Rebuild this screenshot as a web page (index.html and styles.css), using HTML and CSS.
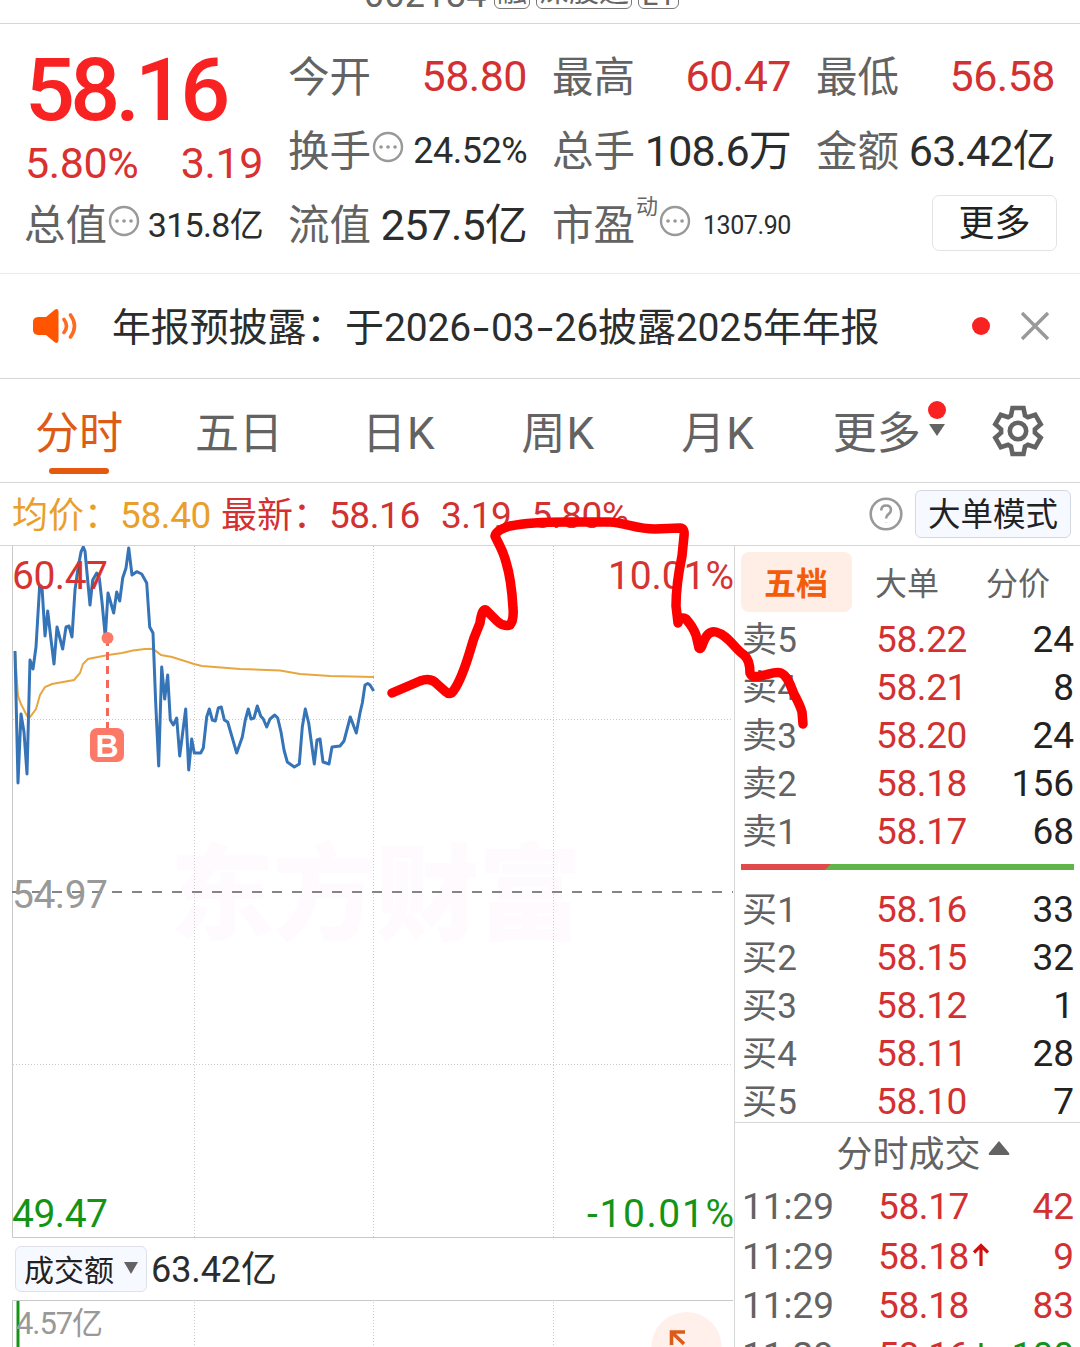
FILE: index.html
```html
<!DOCTYPE html>
<html lang="zh-CN">

<head>
    <meta charset="UTF-8">
    <meta name="viewport" content="width=device-width, initial-scale=1.0">
    <title>分时行情</title>
    <link rel="stylesheet" href="styles.css">
</head>

<body>
    <div id="app">
        <!-- 股票代码 -->
        <div class="code">
            <b>002184</b>
            <span>融</span>
            <span>深股通</span>
            <span>L1</span>
        </div>

        <!-- 行情概览 -->
        <div class="quote">
            <div class="price">
                <strong>58.16</strong>
                <p><span>5.80%</span><span>3.19</span></p>
            </div>
            <div class="cell"><label>今开</label><em class="red">58.80</em></div>
            <div class="cell"><label>最高</label><em class="red">60.47</em></div>
            <div class="cell"><label>最低</label><em class="red">56.58</em></div>
            <div class="cell">
                <label>换手</label>
                <svg class="dots" viewBox="0 0 32 32"><circle cx="16" cy="16" r="14" /><path d="M9 16h.1M16 16h.1M23 16h.1" /></svg>
                <em class="mid">24.52%</em>
            </div>
            <div class="cell"><label>总手</label><em class="wide">108.6万</em></div>
            <div class="cell"><label>金额</label><em class="wide">63.42亿</em></div>
            <div class="cell">
                <label>总值</label>
                <svg class="dots" viewBox="0 0 32 32"><circle cx="16" cy="16" r="14" /><path d="M9 16h.1M16 16h.1M23 16h.1" /></svg>
                <em class="small">315.8亿</em>
            </div>
            <div class="cell"><label>流值</label><em class="wide">257.5亿</em></div>
            <div class="cell">
                <label>市盈</label><sup>动</sup>
                <svg class="dots" viewBox="0 0 32 32"><circle cx="16" cy="16" r="14" /><path d="M9 16h.1M16 16h.1M23 16h.1" /></svg>
                <em class="tiny">1307.90</em>
            </div>
            <div class="cell end"><button class="more">更多</button></div>
        </div>

        <!-- 公告 -->
        <div class="news">
            <svg class="horn" viewBox="0 0 46 36">
                <path class="body" d="M5 9h8L22 1.500q3-1.500 3.500 2v29q-.5 3.500-3.500 2l-9-7.500H5q-5-.5-5-5v-8q0-4.500 5-5z" />
                <path class="wave" d="M31 11.500q5 6.500 0 13M37.500 7q8 11 0 22" />
            </svg>
            <p>年报预披露：于2026<i>-</i>03<i>-</i>26披露2025年年报</p>
            <i class="dot"></i>
            <svg class="close" viewBox="0 0 30 30"><path d="M2 2l26 26M28 2L2 28" /></svg>
        </div>

        <!-- 周期切换 -->
        <div class="tabs">
            <div class="tab active">分时</div>
            <div class="tab">五日</div>
            <div class="tab">日K</div>
            <div class="tab">周K</div>
            <div class="tab">月K</div>
            <div class="tab">更多<i class="dot"></i><i class="down"></i></div>
            <svg class="gear" viewBox="-26 -26 52 52">
                <path d="M-5.500-23H5.500L7-15.500 9.900-13.800 17.200-16.300 22.700-6.700 16.900-1.700V1.700L22.700 6.700 17.200 16.300 9.900 13.800 7 15.500 5.500 23H-5.500L-7 15.500-9.900 13.800-17.200 16.300-22.700 6.700-16.900 1.700V-1.700L-22.700-6.700-17.200-16.300-9.900-13.800-7-15.500Z" />
                <circle r="8.200" />
            </svg>
        </div>

        <div class="info">
            <span class="avg">均价：</span><span class="avg num">58.40</span>
            <span class="red last">最新：</span><span class="red num">58.16</span>
            <span class="red num chg">3.19</span><span class="red num pct">5.80%</span>
            <svg class="help" viewBox="0 0 34 34">
                <circle cx="17" cy="17" r="15.300" />
                <path d="M12.300 13.500q0-5 4.800-5t4.800 4.500q0 2.600-2.600 4.400-2.200 1.500-2.200 4M17 25.200v.2" />
            </svg>
            <button class="mode">大单模式</button>
        </div>

        <div class="main">
            <div class="left">
                <!-- 分时图 -->
                <svg class="chart" viewBox="0 546 734 692">
                    <text class="mark" x="170" y="932" textLength="412">东方财富</text>
                    <path class="frame" d="M12.500 546V1237.500H733" />
                    <path class="grid" d="M194.500 546V1237M373.500 546V1237M553.500 546V1237M13 719.500H733M13 1064.500H733" />
                    <path class="base" d="M12 892H733" />
                    <path class="avg-line" d="M15 651L18 696 21 704 27 716 30 717 36 709 40 695 45 687 52 684 74 680 80 673 83 664 88 659 108 655 122 653 133 650.500 145 649 153 648.700 161 655 172 657 194 664 202 666 240 669 280 670.500 300 674 330 676 374 677" />
                    <path class="price-line" d="M15 651L18 783 21 714 24 732 27 774 30 660 33 669 36 647 39.700 585 42 587 45 636 47.700 611 50.700 637 54 664 57 627 62.700 649 66 627 69 626 72 637 75 590 78 568 81 552 83.300 547 85 551 87 573 90 605 92.700 580 96.700 573 99.300 578 102 602 105.300 637 108 593 113.700 613 116.700 592 119.700 601 122.700 578 126 568 128.700 548 132 575 136.700 571.700 141.700 574 146.700 583 149.700 627 153 633 155.700 703 158.700 766 161.700 667 164.700 699 167.700 675 170.300 720 173.300 725 176.700 718 179.700 756 185.700 709 188.700 770 191.700 739 194.300 753 200.700 753 203.300 748 206.700 717 209.300 709 212.300 720 215.300 721 218.300 708 221.300 707 224.300 720 227.700 722 236.700 753 242.300 737 245.300 720 248.300 709 251 719 254 718 257.300 706 260.700 716 263.300 719 266.700 727 270 719 274.700 715 277.700 718 281 732 284 750 287.300 762 294.300 767 299.300 764 302.300 727 305.300 709 308.700 723 314.300 764 317 740 320 739 323 762 329 764 332 747 340 746 344 741 350.300 717 356.300 733 360 713 362.300 703 365 685 367.700 683.500 370 685 373.700 691" />
                    <path class="buy-line" d="M107.500 638V728" />
                    <circle class="buy" cx="107.500" cy="638" r="6" />
                    <rect class="buy" x="90" y="728" width="34" height="34" rx="7" />
                    <text class="buy-text" x="107" y="756.500">B</text>
                    <text class="axis up" x="12" y="589" textLength="96">60.47</text>
                    <text class="axis up" x="608" y="589" textLength="126">10.01%</text>
                    <text class="axis flat" x="12" y="908" textLength="96">54.97</text>
                    <text class="axis fall" x="12" y="1227" textLength="96">49.47</text>
                    <text class="axis fall" x="587" y="1227" textLength="147">-10.01%</text>
                </svg>
                <div class="amount">
                    <button>成交额<i class="down"></i></button>
                    <span>63.42亿</span>
                </div>
                <svg class="volume" viewBox="0 1300 734 47">
                    <path class="frame" d="M12.500 1347V1300.500H733" />
                    <path class="grid" d="M194.500 1302V1347M373.500 1302V1347M553.500 1302V1347" />
                    <path class="vol-bar" d="M18 1301V1347" />
                    <text class="vol-text" x="16" y="1334" textLength="87">4.57亿</text>
                    <circle class="expand" cx="686.500" cy="1347" r="35" />
                    <path class="expand-icon" d="M671.500 1345V1332H685M672 1332.500L684 1344" />
                </svg>
            </div>

            <!-- 盘口 -->
            <div class="right">
                <div class="types">
                    <span class="on">五档</span>
                    <span>大单</span>
                    <span>分价</span>
                </div>
                <div class="orders">
                    <div class="row"><label>卖5</label><em>58.22</em><b>24</b></div>
                    <div class="row"><label>卖4</label><em>58.21</em><b>8</b></div>
                    <div class="row"><label>卖3</label><em>58.20</em><b>24</b></div>
                    <div class="row"><label>卖2</label><em>58.18</em><b>156</b></div>
                    <div class="row"><label>卖1</label><em>58.17</em><b>68</b></div>
                </div>
                <div class="ratio"></div>
                <div class="orders">
                    <div class="row"><label>买1</label><em>58.16</em><b>33</b></div>
                    <div class="row"><label>买2</label><em>58.15</em><b>32</b></div>
                    <div class="row"><label>买3</label><em>58.12</em><b>1</b></div>
                    <div class="row"><label>买4</label><em>58.11</em><b>28</b></div>
                    <div class="row"><label>买5</label><em>58.10</em><b>7</b></div>
                </div>
                <div class="title">分时成交<svg viewBox="0 0 22 15"><path d="M11 0L21 12q1 2-1 2H2q-2 0-1-2z" /></svg></div>
                <div class="deals">
                    <div class="row"><label>11:29</label><em>58.17</em><b>42</b></div>
                    <div class="row">
                        <label>11:29</label>
                        <em>58.18<svg class="arrow" viewBox="0 0 16 24"><path d="M8 23V3M1 9.500L8 2.500 15 9.500" /></svg></em>
                        <b>9</b>
                    </div>
                    <div class="row"><label>11:29</label><em>58.18</em><b>83</b></div>
                    <div class="row sell">
                        <label>11:29</label>
                        <em>58.16<svg class="arrow" viewBox="0 0 16 24"><path d="M8 1V21M1 14.500L8 21.500 15 14.500" /></svg></em>
                        <b>100</b>
                    </div>
                </div>
            </div>
        </div>

        <!-- 手绘走势 -->
        <svg class="draw" viewBox="0 0 1080 1347">
            <path d="M392 693L420 681Q431 677 437 684L446 692Q450 696 454 690C464 676 470 650 474 638L480 623Q482 608 486 610L497 621Q503 627 510 625Q514 620 513 608C512 590 510 575 506 562C503 550 499 545 495 536Q496 530 510 526C530 522 550 522 567 522H610C626 523 637 529 655 529L680 528Q685 528 684 536L682 556C678 575 676 592 676 606L678 623Q680 616 686 619Q693 627 696 635L699 648Q701 650 703 643Q708 630 716 632C728 635 734 648 744 655Q750 660 750 673Q752 678 760 676C768 675 775 671 781 673C788 676 791 687 794 694Q800 705 802 712L803 724" />
        </svg>
    </div>
</body>

</html>
```

FILE: styles.css
```css
* {
    margin: 0;
    padding: 0;
    box-sizing: border-box;
}

body {
    width: 1080px;
    height: 1347px;
    overflow: hidden;
    background-color: #fff;
    color: #2b2d2d;
    font-family: Roboto, "Noto Sans CJK SC", sans-serif;
}

em,
i {
    font-style: normal;
}

button {
    font-family: inherit;
    color: #222;
}

#app {
    position: relative;
    width: 1080px;
    height: 1347px;
    overflow: hidden;
}

.red {
    color: #d33131;
}

/* 股票代码 */
.code {
    height: 24px;
    display: flex;
    align-items: flex-end;
    padding: 0 0 14px 364px;
    border-bottom: 1px solid #d6d6d6;
    color: #666;
}

.code b {
    width: 130px;
    font-size: 36px;
    font-weight: 400;
    line-height: 30px;
    margin-bottom: -1px;
    letter-spacing: .2px;
}

.code span {
    height: 36px;
    margin: 0 6px 0 0;
    padding: 0 2px;
    border: 1px solid #777;
    border-radius: 6px;
    font-size: 30px;
    line-height: 34px;
}

.code span:last-child {
    width: 41px;
    text-align: center;
    line-height: 42px;
}

/* 行情概览 */
.quote {
    height: 250px;
    display: grid;
    grid-template-columns: repeat(4, 238px);
    grid-template-rows: repeat(3, 74px);
    column-gap: 26px;
    padding: 15px 25px 0;
    border-bottom: 1px solid #ebebeb;
}

.price {
    grid-row: span 2;
}

.price strong {
    display: block;
    height: 102px;
    font-size: 88px;
    font-weight: 500;
    line-height: 102px;
    letter-spacing: -4.800px;
    color: #f92222;
}

.price p {
    display: flex;
    justify-content: space-between;
    font-size: 43px;
    line-height: 44px;
    letter-spacing: -.4px;
    color: #d93030;
}

.cell {
    display: flex;
    align-items: center;
    white-space: nowrap;
}

.cell label {
    margin: -5px 0 0 -1px;
    font-size: 41.500px;
    color: #636363;
}

.cell em {
    margin-left: auto;
    font-size: 43px;
    letter-spacing: -.5px;
}

.cell .wide {
    margin-top: -6px;
    letter-spacing: -.8px;
}

.cell .mid {
    margin-top: 2px;
    font-size: 36px;
}

.cell .small {
    margin-top: -3px;
    font-size: 34px;
    letter-spacing: -.7px;
}

.cell .tiny {
    margin-top: 2px;
    font-size: 25px;
    letter-spacing: -.4px;
}

.cell sup {
    align-self: flex-start;
    margin: 5px 0 0 1px;
    font-size: 22px;
    line-height: 30px;
    color: #666;
}

.cell.end {
    justify-content: flex-end;
}

.dots {
    width: 32px;
    height: 32px;
    margin: -6px 0 0 1px;
    fill: none;
    stroke: #999;
    stroke-width: 2.4;
}

.dots path {
    stroke-width: 3.6;
    stroke-linecap: round;
}

.more {
    width: 125px;
    height: 56px;
    margin: -2px -2px 0 0;
    border: 1px solid #e3e3e3;
    border-radius: 7px;
    background-color: #fff;
    font-size: 36px;
    line-height: 52px;
    padding-top: 2px;
}

/* 公告 */
.news {
    height: 105px;
    display: flex;
    align-items: center;
    padding: 0 30px 1px 33px;
    border-bottom: 1px solid #d6d6d6;
}

.news p {
    flex: 1;
    margin: -3px 0 0 33px;
    font-size: 39px;
    letter-spacing: -.15px;
}

.news p i {
    display: inline-block;
    width: 20px;
    text-align: center;
    transform: scaleX(1.5);
}

.horn {
    width: 46px;
    height: 36px;
}

.horn .body {
    fill: #ff5500;
}

.horn .wave {
    fill: none;
    stroke: #ff6a22;
    stroke-width: 3.6;
    stroke-linecap: round;
}

.dot {
    width: 18px;
    height: 18px;
    border-radius: 50%;
    background-color: #f92222;
}

.close {
    width: 30px;
    height: 30px;
    margin-left: 30px;
    stroke: #999;
    stroke-width: 3.4;
}

/* 周期切换 */
.tabs {
    height: 104px;
    display: flex;
    align-items: center;
    padding: 0 36px 0 35px;
    border-bottom: 1px solid #d6d6d6;
}

.tab {
    position: relative;
    height: 103px;
    margin-right: 72px;
    font-size: 44px;
    line-height: 111px;
    color: #636363;
}

.tab:nth-child(2) {
    margin-right: 79px;
}

.tab:nth-child(3),
.tab:nth-child(4) {
    margin-right: 86px;
    letter-spacing: 1px;
}

.tab:nth-child(5) {
    margin-right: 78px;
    letter-spacing: 1px;
}

.tab:nth-child(6) {
    margin-right: auto;
}

.tab.active {
    color: #dd5b16;
}

.tab.active::after {
    content: "";
    position: absolute;
    left: 14px;
    bottom: 8px;
    width: 60px;
    height: 6px;
    border-radius: 3px;
    background-color: #e55810;
}

.tab .dot {
    position: absolute;
    left: 95px;
    top: 22px;
}

.down {
    border: 8px solid transparent;
    border-top: 12px solid #636363;
    border-bottom: 0;
}

.tab .down {
    position: absolute;
    left: 96px;
    top: 45px;
}

.gear {
    width: 52px;
    height: 52px;
    fill: none;
    stroke: #636363;
    stroke-width: 4.6;
}

.info {
    height: 63px;
    display: flex;
    align-items: center;
    padding: 0 9px 0 12px;
    border-bottom: 1px solid #d6d6d6;
    font-size: 36px;
    white-space: nowrap;
}

.info .avg,
.info .last {
    margin-top: -4px;
}

.info .avg {
    color: #e99f2a;
}

.info .num {
    margin-top: 2px;
    font-size: 37px;
    letter-spacing: -.4px;
}

.info .last {
    margin-left: 10px;
}

.info .chg {
    margin-left: 21px;
}

.info .pct {
    margin-left: 20px;
}

.help {
    width: 34px;
    height: 34px;
    margin: 0 12px 0 auto;
    fill: none;
    stroke: #999;
    stroke-width: 2.6;
}

.mode {
    width: 156px;
    height: 48px;
    border: 1px solid #d4d8e0;
    border-radius: 6px;
    background-color: #f6f9ff;
    padding-top: 2px;
    font-size: 32.500px;
    line-height: 44px;
}

.main {
    display: flex;
    height: 801px;
}

.left {
    width: 734px;
}

/* 分时图 */
.chart,
.volume {
    display: block;
    width: 734px;
    height: 692px;
}

.volume {
    height: 47px;
}

.chart path,
.volume path {
    fill: none;
}

.mark {
    font-size: 104px;
    font-weight: 900;
    fill: #fefafe;
}

.frame {
    stroke: #c9c9c9;
}

.grid {
    stroke: #ccc;
    stroke-dasharray: 1 2;
}

.base {
    stroke: #858585;
    stroke-width: 2;
    stroke-dasharray: 10 10;
}

.price-line {
    stroke: #3674b8;
    stroke-width: 3;
    stroke-linejoin: round;
}

.avg-line {
    stroke: #e8a640;
    stroke-width: 2;
}

.buy {
    fill: #fc7867;
}

.buy-line {
    stroke: #f4685a;
    stroke-width: 3;
    stroke-dasharray: 8 6;
}

.buy-text {
    fill: #fff;
    font-family: "Liberation Sans", sans-serif;
    font-size: 32px;
    font-weight: 700;
    text-anchor: middle;
}

.axis {
    font-size: 39px;
}

.up {
    fill: #d63333;
}

.flat {
    fill: #999;
}

.fall {
    fill: #149414;
}

.amount {
    height: 62px;
    display: flex;
    align-items: center;
    padding-left: 15px;
    font-size: 36px;
}

.amount button {
    width: 132px;
    height: 46px;
    display: flex;
    align-items: center;
    justify-content: space-between;
    padding: 0 8px 3px 8px;
    border: 1px solid #dfe1e8;
    border-radius: 6px;
    background-color: #f6f9ff;
    font-size: 30px;
}

.amount .down {
    border-width: 12px 7px 0;
}

.amount span {
    margin: -7px 0 0 4px;
    letter-spacing: -.1px;
}

.vol-text {
    font-size: 31px;
    fill: #999;
}

.vol-bar {
    stroke: #149414;
    stroke-width: 3;
}

.expand {
    fill: #fff0eb;
}

.volume .expand-icon {
    stroke: #dd5b16;
    stroke-width: 3.6;
}

/* 盘口 */
.right {
    width: 346px;
    border-left: 1px solid #d6d6d6;
}

.types {
    height: 69px;
    display: flex;
    padding: 6px 0 0 6px;
    font-size: 32px;
    color: #636363;
}

.types span {
    width: 111px;
    height: 60px;
    line-height: 65px;
    text-align: center;
    text-indent: -1px;
}

.types .on {
    border-radius: 8px;
    background-color: #ffeee6;
    color: #f45c0a;
    font-weight: 700;
}

.row {
    height: 48px;
    display: grid;
    grid-template-columns: 134px 1fr auto;
    padding: 0 6px 0 7px;
    line-height: 49px;
}

.row label {
    font-size: 35px;
    line-height: 51px;
    letter-spacing: .2px;
    color: #636363;
}

.row em {
    font-size: 37px;
    letter-spacing: -.4px;
    color: #d33131;
}

.row b {
    font-size: 37px;
    font-weight: 400;
    color: #222;
}

.ratio {
    height: 6px;
    margin: 9px 6px 15px;
    background: linear-gradient(135deg, #e04a4a 63px, #5fb548 64px);
}

.title {
    height: 60px;
    display: flex;
    align-items: center;
    justify-content: center;
    margin-top: -3px;
    padding: 0 0 3px 31px;
    border-top: 1px solid #d6d6d6;
    font-size: 36px;
    color: #636363;
}

.title svg {
    width: 22px;
    height: 15px;
    margin: -6px 0 0 7px;
    fill: #636363;
}

.deals .row {
    height: 49.500px;
    grid-template-columns: 136px 1fr auto;
}

.deals label {
    font-size: 37px;
    line-height: 49px;
    letter-spacing: 0;
}

.deals b {
    color: #d33131;
}

.deals .sell b {
    color: #149414;
}

.arrow {
    width: 16px;
    height: 24px;
    margin: 0 0 2px 4px;
    fill: none;
    stroke: #d00f0f;
    stroke-width: 3.2;
}

.sell .arrow {
    stroke: #149414;
}

/* 手绘线盖在整页上 */
.draw {
    position: absolute;
    left: 0;
    top: 0;
    width: 1080px;
    height: 1347px;
    fill: none;
    stroke: #ff0000;
    stroke-width: 9.500;
    stroke-linecap: round;
    stroke-linejoin: round;
    pointer-events: none;
}
```
